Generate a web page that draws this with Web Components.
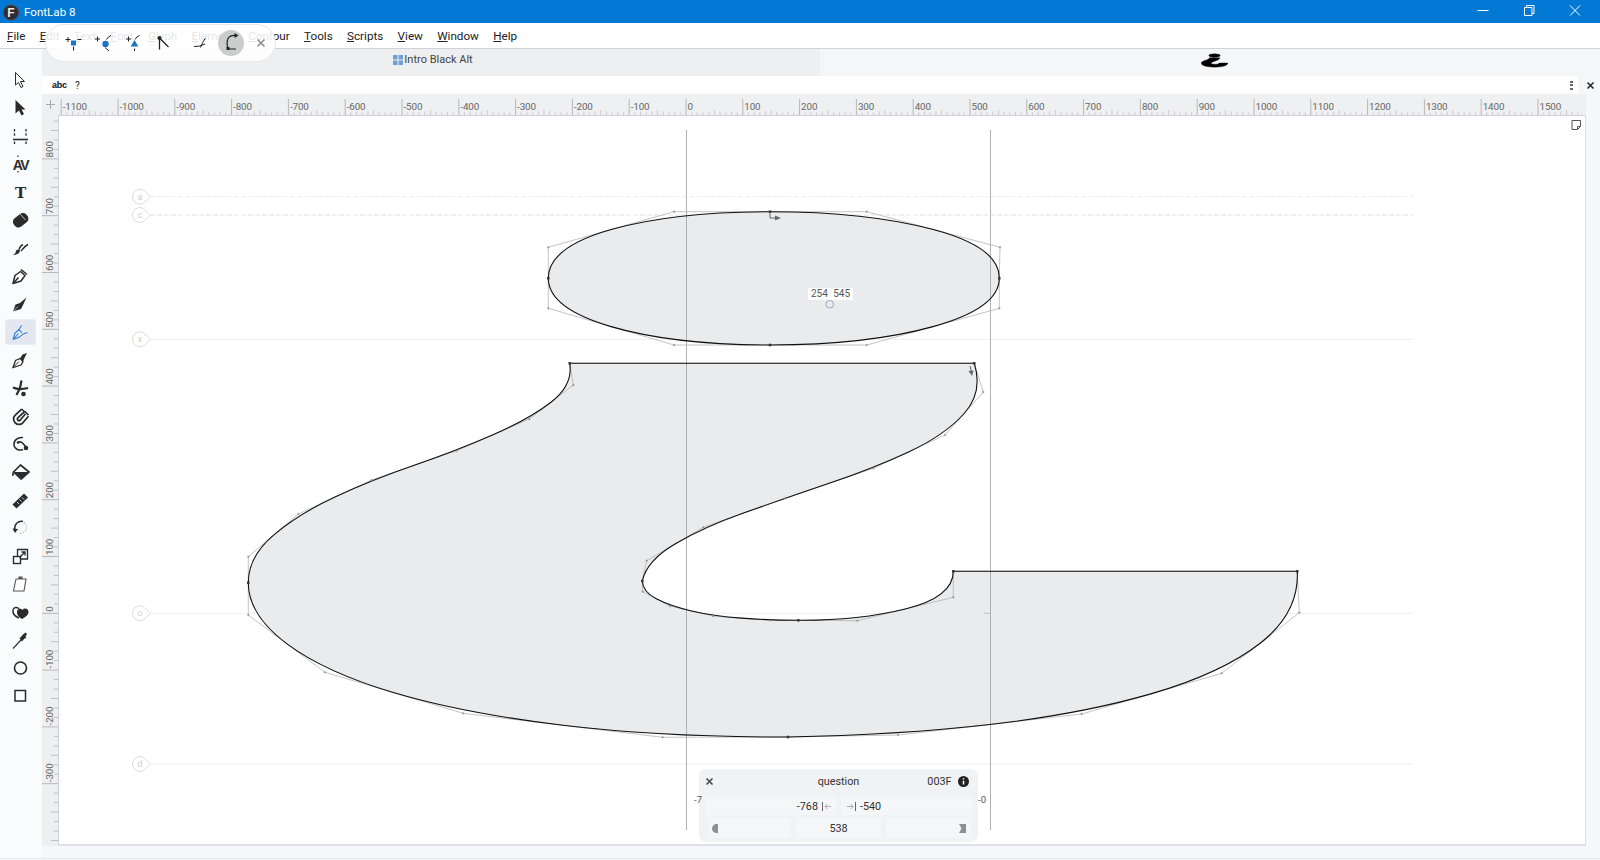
<!DOCTYPE html>
<html>
<head>
<meta charset="utf-8">
<title>FontLab 8</title>
<style>
  html, body { margin: 0; height: 100%; overflow: hidden; background: #f5f7fb; }
  body { font-family: Roboto, "Noto Sans", sans-serif; font-size: 12px; color: #222; }
</style>
</head>
<body>
<fl-app></fl-app>

<script>
const UI_FONT = `Roboto, "Noto Sans", sans-serif`;
const UNIT = 0.568, ORIGIN_X = 686, BASELINE_Y = 613.3;

// contours in page px, TrueType style: on-curve [x, y, 1], off-curve [x, y]
const CONTOURS = [
  [[548.3,278.3,1],[548.3,247.3],[674,211.7],[770,211.7,1],[866.7,211.7],[1000,247.3],[999.3,278.3,1],
   [999.3,308.3],[866.7,345],[770,345,1],[674,345],[548.3,308.3]],
  [[569.7,363.3,1],[974.3,363.3,1],[983.3,392],[945,435],[873.3,468.3],[785,498.3],[703.3,527.3],[646.7,560.7],
   [642.3,581,1],[642.7,591.7],[670,606],[713,616],[770,620.3],[798.3,620.3,1],[857.3,620.7],[953.3,597.3],
   [953.3,571.3,1],[1297.3,571.3,1],[1299.3,612.7],[1221.7,673.3],[1081.7,714],[898,735],[788,737,1],
   [662.7,737.3],[463.3,713.3],[325,672.3],[248.3,615],[248.3,582.7,1],[248.3,556.7],[298.3,514],[371.7,480],
   [456.7,450.7],[529.3,419],[573.3,385]]
];

function contourPath(pts) {
  let d = `M${pts[0][0]} ${pts[0][1]}`;
  const n = pts.length;
  for (let i = 1; i <= n; i++) {
    const p = pts[i % n], prev = pts[i - 1];
    if (p[2]) { if (prev[2]) d += `L${p[0]} ${p[1]}`; continue; }
    const next = pts[(i + 1) % n];
    if (next[2]) d += `Q${p[0]} ${p[1]} ${next[0]} ${next[1]}`;
    else d += `Q${p[0]} ${p[1]} ${(p[0] + next[0]) / 2} ${(p[1] + next[1]) / 2}`;
  }
  return d + "Z";
}
const GLYPH_D = CONTOURS.map(contourPath).join("");

class FlTitlebar extends HTMLElement {
  constructor() {
    super();
    this.attachShadow({ mode: "open" }).innerHTML = `
<style>
  :host { display: flex; align-items: center; height: 23px; background: #0078d4; color: #fff; font: 11.6px ${UI_FONT}; }
  .logo { margin: 0 5px 0 2px; }
  .title { flex: 1; }
  svg.btn { display: block; width: 46px; height: 23px; fill: none; stroke: #fff; stroke-width: 1; }
</style>
<svg class="logo" width="17" height="20" viewBox="0 0 17 20">
  <circle cx="9" cy="10.5" r="7.5" fill="#2a2d36" stroke="#5a4038"/>
  <text x="9" y="14.8" text-anchor="middle" font-family="Liberation Sans" font-weight="700" font-size="12" fill="#fbe9dc">F</text>
</svg>
<span class="title">FontLab 8</span>
<svg class="btn" viewBox="0 0 46 23"><path d="M17.5 10.5h11"/></svg>
<svg class="btn" viewBox="0 0 46 23"><path d="M18.5 7.5h7.5v8h-7.5zM20.5 7.5v-2h7.500v8h-2"/></svg>
<svg class="btn" style="margin-right:2px" viewBox="0 0 46 23"><path d="M18 5.500l10 10M28 5.500l-10 10"/></svg>`;
  }
}

class FlMenubar extends HTMLElement {
  constructor() {
    super();
    const items = ["File", "Edit", "Text", "Font", "Glyph", "Element", "Contour", "Tools", "Scripts", "View", "Window", "Help"];
    this.attachShadow({ mode: "open" }).innerHTML = `
<style>
  :host { display: flex; align-items: center; gap: 14.3px; height: 25px; padding-left: 7px; background: #fff; border-bottom: 1px solid #cfd2d8; font: 11.7px ${UI_FONT}; color: #222; }
</style>
${items.map(t => `<span><u>${t[0]}</u>${t.slice(1)}</span>`).join("")}`;
  }
}

class FlFloatBar extends HTMLElement {
  constructor() {
    super();
    this.attachShadow({ mode: "open" }).innerHTML = `
<style>
  :host { position: absolute; left: 45px; top: 24px; width: 231px; height: 38px; display: block;
    background: rgba(255,255,255,.88); border: 1px solid #e6e7ea; border-radius: 19px; box-sizing: border-box; }
  svg { position: absolute; left: -1px; top: -1px; width: 231px; height: 38px; display: block; }
</style>
<svg viewBox="45 24 231 38" fill="none" stroke="#222" stroke-width="1">
  <path d="M65.500 39.500h5M68 37v5M77.500 39.500h4M73.500 46.500v4"/>
  <rect x="71" y="40.500" width="5" height="5" fill="#1c74c4" stroke="none"/>
  <path d="M95 39h5M97.500 36.500v5M111 35.500q-3 1 -4.500 4M105 47.500l4 3.500"/>
  <circle cx="105.500" cy="44" r="3.200" fill="#1c74c4" stroke="none"/>
  <path d="M126 39h5M128.500 36.500v5M139.500 35.500q-3 1 -4.500 4M134.500 48.500v2.500"/>
  <path d="M134.500 40l3.800 6.500h-7.600z" fill="#1c74c4" stroke="none"/>
  <path d="M159.500 38v11.500M159.500 38l9 9" stroke-width="1.300"/>
  <circle cx="159.500" cy="38" r="2" fill="#222" stroke="none"/>
  <path d="M194 46.500q5 .5 11 -2.500M205.500 38q-3 4 -5 9.500"/>
  <circle cx="231" cy="43" r="13" fill="#cbcccc" stroke="none"/>
  <path d="M236 35.500q-6 -.5 -8 3q-1 3 -1 5q0 4 2 5.500h7" stroke-width="1.200"/>
  <path d="M234.500 33l4 2.500l-4 2.500z" fill="#222" stroke="none"/>
  <rect x="226.500" y="47" width="3" height="3" fill="#222" stroke="none"/>
  <path d="M257.500 39.500l7 7M264.500 39.500l-7 7" stroke="#8b8b8b" stroke-width="1.600"/>
</svg>`;
  }
}

class FlTabstrip extends HTMLElement {
  constructor() {
    super();
    this.attachShadow({ mode: "open" }).innerHTML = `
<style>
  :host { display: flex; height: 27px; background: #f4f6f8; font: 11px ${UI_FONT}; color: #444; flex: none; }
  .tab { width: 778px; background: #eeeff1; display: flex; align-items: center; justify-content: center; gap: 1px; padding-bottom: 6px; box-sizing: border-box; padding-left: 4px; }
  .tab svg { display: block; }
  .preview { flex: 1; position: relative; }
  .preview svg { display: block; margin-left: 381px; margin-top: 4px; }
</style>
<div class="tab">
  <svg width="10" height="10" viewBox="0 0 10 10" fill="#6f9fd4"><rect width="4.500" height="4.500"/><rect x="5.500" width="4.500" height="4.500"/><rect y="5.500" width="4.500" height="4.500"/><rect x="5.500" y="5.500" width="4.500" height="4.500"/></svg>
  <span>Intro Black Alt</span>
</div>
<div class="preview">
  <svg width="27" height="15" viewBox="240 205 1065 540"><path d="${GLYPH_D}" fill="#000" fill-rule="evenodd" stroke="#000" stroke-width="14"/></svg>
</div>`;
  }
}

const NIB = "M3 17.500L5 9.500L10.500 5.500L15 9.500L11 15Z";
const MAGNET = "M13 4.500L6.500 10.500A3.500 3.500 0 0 0 11.500 15.500L17 9";
const TOOL_ICONS = {
  pointer: `<path d="M5.500 2.500V15L8.500 12.500L11 17.500L13 16.500L10.500 11.500H14.500Z" fill="#fff" stroke="currentColor" stroke-width="1"/>`,
  arrow: `<path d="M5.500 2V15.500L9 12.500L11.500 17.500L14 16L11.500 11.500H15.500Z" fill="currentColor"/>`,
  metrics: `<path d="M3 13.500H18" stroke="currentColor" stroke-width="1.600"/><path d="M4.500 3V11.500M4.500 15.500V19M16 3V11.500M16 15.500V19" stroke="currentColor" stroke-dasharray="2.500 1.800" stroke-width="1.300"/>`,
  kern: `<text x="10.500" y="15.500" text-anchor="middle" font-family="Liberation Sans" font-weight="700" font-size="14" letter-spacing="-1.500" fill="currentColor">AV</text><path d="M8 1.500v1.500M8 17v1.500" stroke="currentColor" stroke-width="1.200"/>`,
  type: `<text x="10.500" y="16" text-anchor="middle" font-family="DejaVu Serif" font-weight="700" font-size="15" fill="currentColor">T</text>`,
  eraser: `<rect x="2.500" y="5" width="16" height="10.500" rx="4.500" transform="rotate(-38 10.500 10)" fill="currentColor"/><path d="M10.500 4.500L15.500 10" stroke="#fff" stroke-width=".7"/>`,
  brush: `<path d="M2.500 16.500C5 16.500 5.500 15 6 13C7 11 9.500 11 10 12.500C10 15 6.500 17.500 2.500 16.500Z" fill="currentColor"/><path d="M9 11.500C10 9 11.500 7 13 6.500M11 13C13.500 10 15.500 7.500 18 6.500" fill="none" stroke="currentColor" stroke-width="1.400"/>`,
  penOutline: `<path d="${NIB}" fill="#fff" stroke="currentColor" stroke-width="1.500" stroke-linejoin="round"/><path d="M3 17.500L8.500 11.500M11 3.500L17 8.500" fill="none" stroke="currentColor" stroke-width="1.600"/>`,
  penFill: `<path d="M3 17.500L5.500 10.500L10 9L16.500 3.500L13.500 10L11 15Z" fill="currentColor"/><path d="M3 17.500L8 12.500" stroke="#fff" stroke-width=".6"/>`,
  penBlue: `<path d="M3 17.500L5 11L9 7.500L11.500 3.500M3 17.500L9.500 15C12 12 14 11.500 17.500 10.500M3 17.500L8.500 11.500M9 7.500L12 11" fill="none" stroke="currentColor" stroke-width="1.100"/>`,
  penHalf: `<path d="M3 17.500L5.500 10.500L10 8.500L13 11.500L11 15Z" fill="#fff" stroke="currentColor" stroke-width="1.300"/><path d="M10 8.500L12.500 4.500L17 3L14.500 8L13 11.500Z" fill="currentColor"/><path d="M3 17.500L9 11.500" stroke="currentColor"/>`,
  knife: `<path d="M11.500 2.500L10 10L6.500 17" fill="none" stroke="currentColor" stroke-width="2.200"/><path d="M3 9.500C7 11.500 12 11.500 18 10" fill="none" stroke="currentColor" stroke-width="2.200"/><circle cx="13.500" cy="16" r="2.300" fill="currentColor"/>`,
  magnet: `<path d="${MAGNET}" fill="none" stroke="currentColor" stroke-width="5.500"/><path d="${MAGNET}" fill="none" stroke="#fafbfd" stroke-width="2"/><path d="M11.500 3L15.500 6.500M15 5.500L18.500 9" stroke="currentColor" stroke-width="1.500"/>`,
  spiral: `<path d="M13 3.500C7.500 3 3.500 6.500 4 11C4.500 15.500 9.500 17 13 15.500" fill="none" stroke="currentColor" stroke-width="1.500"/><path d="M8 8.500C11 6.500 13 9.500 16 13" fill="none" stroke="currentColor" stroke-width="1.500"/><circle cx="8" cy="8.500" r="1.300" fill="currentColor"/><circle cx="16" cy="14" r="2.300" fill="currentColor"/>`,
  bucket: `<path d="M10.500 3L19 10L11 17L3.500 10Z" fill="#fff" stroke="currentColor" stroke-width="1.700" stroke-linejoin="round"/><path d="M4 10H18.500L11 16.500Z" fill="currentColor"/><path d="M3 9.500C2 11.500 1.500 13 2.500 14C3.700 14.500 4.300 13 3.500 10Z" fill="currentColor"/>`,
  ruler: `<path d="M2.500 14.500L14 3.500L18 7.500L6.500 18.500Z" fill="currentColor"/><path d="M7 12L9 14M9.500 9.500L11.500 11.500M12 7.500L14 9.500" stroke="#fff" stroke-width=".8"/>`,
  rotate: `<path d="M13 3.500C8.500 2.500 4 6 4.800 11.500" fill="none" stroke="currentColor" stroke-width="1.400"/><path d="M2.500 10.500L5 15L8 11Z" fill="currentColor"/><path d="M14 4.500C18.500 8 17 14.500 10 15.500" fill="none" stroke="#bbb" stroke-width="1.300" stroke-dasharray="1.300 1.500"/>`,
  scale: `<rect x="3.500" y="10.500" width="7" height="7" fill="#fff" stroke="currentColor" stroke-width="1.400"/><path d="M7.500 10V3.500H17.500V13H11" fill="none" stroke="currentColor" stroke-width="1.300"/><path d="M9.500 11.500L15 6M11.500 6H15V9.500" fill="none" stroke="currentColor" stroke-width="1.300"/>`,
  shear: `<path d="M6 5H16L14 17H3.500Z" fill="#fff" stroke="#555" stroke-width="1.100"/><path d="M9 5V3H12V5" fill="#555" stroke="#555" stroke-width="1.100"/>`,
  heart: `<path d="M9 16C5 14.500 2.500 11.500 3 8C3.500 5 7.500 4.500 9 7" fill="#fff" stroke="currentColor" stroke-width="1.500"/><path d="M12 17C8.500 15 6.500 12.500 7 9.500C7.500 6 11 6 12.500 8C14 5.800 18 6 18.500 9.500C19 12.500 15.500 15 12 17Z" fill="currentColor"/>`,
  dropper: `<path d="M3 18.500L11 10" stroke="currentColor" stroke-width="1.100"/><path d="M9.500 8.500L13 4.500L15.500 2.500L17 4L15.500 6.500L16.500 8L14.500 8.500L12 11.500Z" fill="currentColor"/>`,
  circle: `<circle cx="10.500" cy="10" r="6" fill="none" stroke="currentColor" stroke-width="1.600"/>`,
  square: `<rect x="5" y="4.500" width="10.500" height="10.500" fill="none" stroke="currentColor" stroke-width="1.500"/>`
};

class FlTool extends HTMLElement {
  connectedCallback() {
    if (this.shadowRoot) return;
    this.attachShadow({ mode: "open" }).innerHTML = `
<style>
  :host { display: flex; align-items: center; justify-content: center; width: 31px; height: 26px; margin: 1px 0; color: #2b2b2b; border-radius: 4px; box-sizing: border-box; }
  :host([active]) { background: #e3e7ef; color: #2f7bd4; box-shadow: inset 0 0 0 1px #e9ecf2; }
  svg { display: block; width: 20px; height: 20px; margin-left: -1px; }
</style>
<svg viewBox="0 0 20 20">${TOOL_ICONS[this.getAttribute("icon")] || ""}</svg>`;
  }
}

class FlToolrail extends HTMLElement {
  constructor() {
    super();
    this.attachShadow({ mode: "open" }).innerHTML = `
<style>
  :host { display: flex; flex-direction: column; width: 42px; padding: 17px 0 0 5px; box-sizing: border-box; background: #fafbfd; flex: none; }
</style>
<slot></slot>`;
  }
}

class FlTextbar extends HTMLElement {
  constructor() {
    super();
    this.attachShadow({ mode: "open" }).innerHTML = `
<style>
  :host { display: flex; align-items: center; height: 18px; flex: none; font: 10px ${UI_FONT}; color: #222; background: #f5f7fb; }
  .field { flex: 1; height: 100%; background: #fff; display: flex; align-items: center; padding-left: 10px; gap: 8px; }
  b { font: 700 9px "Liberation Sans", sans-serif; letter-spacing: -.2px; color: #111; }
  .dots { margin-left: auto; margin-right: 5px; display: flex; flex-direction: column; gap: 1.500px; }
  .dots i { display: block; width: 3px; height: 2px; background: #666; }
  svg { display: block; margin: 0 5px 0 8px; }
</style>
<div class="field"><b>abc</b><span>?</span><div class="dots"><i></i><i></i><i></i></div></div>
<svg width="9" height="9" viewBox="0 0 9 9"><path d="M1.500 1.500l6 6M7.500 1.500l-6 6" stroke="#222" stroke-width="1.500"/></svg>`;
  }
}

class FlRuler extends HTMLElement {
  connectedCallback() {
    if (this.shadowRoot) return;
    const vertical = this.getAttribute("orientation") === "vertical";
    let out = "";
    if (vertical) {
      for (let k = -24; k <= 54; k++) {
        const u = k * 100 / 6, y = BASELINE_Y - u * UNIT;
        if (y < 115 || y > 846) continue;
        if (k % 6 === 0 && k > -24) {
          out += `<path d="M42 ${y}H58" stroke="#b5b7ba"/>`;
          out += `<text transform="translate(52.500 ${y - 1.500}) rotate(-90)">${Math.round(u)}</text>`;
        } else {
          out += `<path d="M${k % 3 === 0 ? 51 : 54} ${y}H58" stroke="#aaa" stroke-width=".7"/>`;
        }
      }
    } else {
      for (let u = -1100; u <= 1570; u += 10) {
        const x = ORIGIN_X + u * UNIT;
        if (u % 100 === 0) {
          out += `<path d="M${x} 99V115" stroke="#b5b7ba"/>`;
          out += `<text x="${x + 1.500}" y="109.500">${u}</text>`;
        } else {
          const h = u % 50 === 0 ? 5 : (u % 20 === 0 ? 3.500 : 2.500);
          out += `<path d="M${x} ${115 - h}V115" stroke="#bbb" stroke-width=".7"/>`;
        }
      }
    }
    const box = vertical ? "42 115 16 731" : "58 94 1529 21";
    this.attachShadow({ mode: "open" }).innerHTML = `
<style>
  :host { display: block; background: #eff0f1; min-width: 0; min-height: 0; }
  svg { display: block; width: 100%; height: 100%; font: 9.800px ${UI_FONT}; letter-spacing: -.1px; fill: #666; }
  :host([orientation="vertical"]) { background: #eef0f0; }
</style>
<svg viewBox="${box}" preserveAspectRatio="xMinYMin slice">${out}</svg>`;
  }
}

class FlCorner extends HTMLElement {
  constructor() {
    super();
    this.attachShadow({ mode: "open" }).innerHTML = `
<style>:host { display: flex; align-items: center; justify-content: center; background: #eff0f1; }</style>
<svg width="9" height="9" viewBox="0 0 9 9"><path d="M4.500 0v9M0 4.500h9" stroke="#a8a8a8"/></svg>`;
  }
}

function guideBubble(x, y, label) {
  return `<path d="M${x - 2} ${y - 7.500}a7.500 7.500 0 0 0 0 15c3 0 6 -3 10.500 -7.500c-4.500 -4.500 -7.500 -7.500 -10.500 -7.500z" fill="#fff" stroke="#dcdcdc" stroke-width="1"/>
    <text x="${x - 2}" y="${y + 3}" text-anchor="middle" font-size="9" font-family="Roboto" fill="#cfcfcf">${label}</text>`;
}

class FlCanvas extends HTMLElement {
  constructor() {
    super();
    const guides = [[196.700, "a"], [215, "c"], [339.300, "x"], [613.300, "o"], [764, "d"]];
    let guideLines = "", bubbles = "";
    guides.forEach(([y, l], i) => {
      guideLines += `<path d="M150 ${y}H1413" stroke="${i === 1 ? "#e4e4e4" : "#eeeeee"}" ${i < 2 ? 'stroke-dasharray="5 2"' : ""}/>`;
      bubbles += guideBubble(142, y, l);
    });
    let handles = "", nodes = "";
    CONTOURS.forEach(pts => {
      handles += `<polygon points="${pts.map(p => p.slice(0, 2).join(",")).join(" ")}"/>`;
      pts.forEach(p => {
        nodes += p[2]
          ? `<rect x="${p[0] - 1.250}" y="${p[1] - 1.250}" width="2.500" height="2.500" fill="#333"/>`
          : `<path d="M${p[0] - 1.200} ${p[1]}h2.400M${p[0]} ${p[1] - 1.200}v2.400" stroke="#888" stroke-width=".7"/>`;
      });
    });
    this.attachShadow({ mode: "open" }).innerHTML = `
<style>
  :host { display: block; position: relative; background: #fff; border-left: 1.500px solid #cdd0df; border-top: 1.500px solid #cdd0df; border-right: 1.500px solid #dcdfea; border-bottom: 2px solid #dee0ee; box-sizing: border-box; min-width: 0; min-height: 0; overflow: visible; }
  svg.stage { position: absolute; left: -1.500px; top: -1.500px; width: 1528px; height: 731px; display: block; }
  .coord { position: absolute; left: 749px; top: 172px; width: 45px; height: 12px; background: #fff; font: 10px/12px ${UI_FONT}; color: #555; text-align: center; word-spacing: 3px; }
  .note { position: absolute; right: 3px; top: 3px; }
</style>
<svg class="stage" viewBox="58 115 1528 731">
  ${guideLines}
  <path d="${GLYPH_D}" fill="#eaebec" fill-rule="evenodd"/>
  <path d="M686.500 130V830M990.500 130V830" stroke="#b0b0b0" stroke-width="1"/>
  <g fill="none" stroke="#aaa" stroke-width=".7">${handles}</g>
  <path d="${GLYPH_D}" fill="none" stroke="#111" stroke-width="1.100"/>
  ${nodes}
  <path d="M984 613.300H990" stroke="#b5b5b5" stroke-width=".8"/>
  <path d="M770 212V218H776" fill="none" stroke="#666"/><path d="M775 215.500l6 2.500l-6 2.500z" fill="#666"/>
  <path d="M970 366L971.500 372" fill="none" stroke="#666"/><path d="M968.500 371l3.500 5l1.500 -5.500z" fill="#666"/>
  ${bubbles}
  <circle cx="829.700" cy="304.300" r="3.800" fill="#eaebec" stroke="#8ea0c8" stroke-width=".9"/>
</svg>
<span class="coord">254 545</span>
<svg class="note" width="11" height="12" viewBox="0 0 11 12"><path d="M1 1.500h8.500v6l-3 3h-5.500z" fill="#fff" stroke="#555"/><path d="M6.500 10.500v-3h3" fill="none" stroke="#555"/></svg>
<slot></slot>`;
  }
}

class FlGlyphPanel extends HTMLElement {
  constructor() {
    super();
    this.attachShadow({ mode: "open" }).innerHTML = `
<style>
  :host { position: absolute; left: 640px; top: 653px; width: 279px; height: 73px; display: flex; flex-direction: column; box-sizing: border-box; padding: 3px 6px 2px; gap: 4px; background: #f1f2f3; border-radius: 7px; font: 10.800px ${UI_FONT}; color: #333; }
  .side { position: absolute; top: 25px; color: #555; font-size: 9.500px; }
  .head { height: 19px; display: grid; grid-template-columns: 1fr auto 1fr; align-items: center; }
  .head .end { display: flex; align-items: center; justify-content: flex-end; gap: 6px; padding-right: 3.500px; }
  .two { display: grid; grid-template-columns: 1fr 1fr; gap: 5px; height: 18px; margin-top: 2px; }
  .three { display: grid; grid-template-columns: 82px 85px 85px; gap: 5px; height: 20px; margin-left: 4px; margin-top: -1px; }
  .f { background: #f5f6f7; display: flex; align-items: center; gap: 4px; border-radius: 2px; }
  .r { justify-content: flex-end; padding-right: 5px; }
  .l { padding-left: 6px; }
  .c { justify-content: center; }
  svg { display: block; }
</style>
<span class="side" style="left:-5px">-7</span>
<span class="side" style="right:-8px">-0</span>
<div class="head">
  <svg width="9" height="9" viewBox="0 0 9 9" style="margin-left:0"><path d="M1.500 1.500l6 6M7.500 1.500l-6 6" stroke="#444" stroke-width="1.500"/></svg>
  <span class="name">question</span>
  <div class="end"><span>003F</span>
  <svg width="11" height="11" viewBox="0 0 11 11"><circle cx="5.500" cy="5.500" r="5.500" fill="#222"/><path d="M5.500 4.800v3.700M5.500 2.300v1.300" stroke="#fff" stroke-width="1.500"/></svg></div>
</div>
<div class="two">
  <div class="f r"><span>-768</span><svg width="9" height="9" viewBox="0 0 9 9"><path d="M.5 0v9" stroke="#666"/><path d="M3 4.500h6M3 4.500l2.500-2.500M3 4.500l2.500 2.500" fill="none" stroke="#999" stroke-width=".8"/></svg></div>
  <div class="f l"><svg width="9" height="9" viewBox="0 0 9 9"><path d="M8.500 0v9" stroke="#666"/><path d="M0 4.500h6M6 4.500l-2.500-2.500M6 4.500l-2.500 2.500" fill="none" stroke="#999" stroke-width=".8"/></svg><span>-540</span></div>
</div>
<div class="three">
  <div class="f" style="padding-left:3px"><svg width="7" height="9" viewBox="0 0 7 9"><path d="M6 0v9H3.500Q0 7.500 0 4.500Q0 1.500 3.500 0z" fill="#8d9090"/></svg></div>
  <div class="f c">538</div>
  <div class="f r"><svg width="7" height="9" viewBox="0 0 7 9"><path d="M0 0h7v9H0l2.500-4.500z" fill="#8d9090"/></svg></div>
</div>`;
  }
}

class FlApp extends HTMLElement {
  constructor() {
    super();
    const tools = ["pointer","arrow","metrics","kern","type","eraser","brush","penOutline","penFill","penBlue","penHalf","knife","magnet","spiral","bucket","ruler","rotate","scale","shear","heart","dropper","circle","square"];
    this.attachShadow({ mode: "open" }).innerHTML = `
<style>
  :host { display: flex; flex-direction: column; position: relative; width: 1600px; height: 860px; overflow: hidden; background: #f5f7fb; }
  .work { flex: 1; display: flex; min-height: 0; }
  .main { flex: 1; display: flex; flex-direction: column; min-width: 0; }
  .grid { flex: 1; display: grid; grid-template-columns: 16px 1528px; grid-template-rows: 21px 731px; }
  .foot { flex: none; height: 1px; margin-bottom: 1px; background: #e6e8ec; }
  fl-titlebar, fl-menubar { flex: none; }
</style>
<fl-titlebar></fl-titlebar>
<fl-menubar></fl-menubar>
<div class="work">
  <fl-toolrail>${tools.map(t => `<fl-tool icon="${t}"${t === "penBlue" ? " active" : ""}></fl-tool>`).join("")}</fl-toolrail>
  <div class="main">
    <fl-tabstrip></fl-tabstrip>
    <fl-textbar></fl-textbar>
    <div class="grid">
      <fl-corner></fl-corner>
      <fl-ruler orientation="horizontal"></fl-ruler>
      <fl-ruler orientation="vertical"></fl-ruler>
      <fl-canvas><fl-glyph-panel></fl-glyph-panel></fl-canvas>
    </div>
  </div>
</div>
<div class="foot"></div>
<fl-float-bar></fl-float-bar>`;
  }
}

customElements.define("fl-titlebar", FlTitlebar);
customElements.define("fl-menubar", FlMenubar);
customElements.define("fl-float-bar", FlFloatBar);
customElements.define("fl-tabstrip", FlTabstrip);
customElements.define("fl-tool", FlTool);
customElements.define("fl-toolrail", FlToolrail);
customElements.define("fl-textbar", FlTextbar);
customElements.define("fl-ruler", FlRuler);
customElements.define("fl-corner", FlCorner);
customElements.define("fl-canvas", FlCanvas);
customElements.define("fl-glyph-panel", FlGlyphPanel);
customElements.define("fl-app", FlApp);
</script>
</body>
</html>
